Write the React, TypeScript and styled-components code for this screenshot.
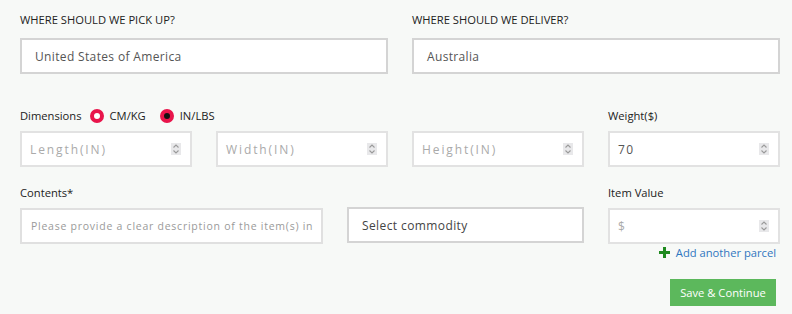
import { FC } from "react";
import styled, { createGlobalStyle } from "styled-components";

const GlobalStyle = createGlobalStyle`
  html, body {
    margin: 0;
    padding: 0;
    background: #f7f9f7;
  }
  body {
    font-family: "Open Sans", "Noto Sans", Arial, sans-serif;
    color: #333;
  }
`;

const Page = styled.div`
  width: 760px;
  padding: 11px 12px 6px 20px;
`;

const Grid = styled.div`
  display: grid;
  grid-template-columns: repeat(4, 172px);
  column-gap: 24px;
`;

const Field = styled.div<{ span?: number }>`
  grid-column: span ${(p) => p.span || 1};
  display: flex;
  flex-direction: column;
`;

const Label = styled.div<{ upper?: boolean }>`
  height: 18px;
  line-height: 18px;
  font-size: 11.2px;
  color: #222;
  margin-bottom: ${(p) => (p.upper ? "9px" : "6px")};
  display: flex;
  align-items: center;
  gap: 6px;
`;

const TextBox = styled.div`
  height: 36px;
  box-sizing: border-box;
  border: 2px solid #d4d4d4;
  background: #fff;
  padding: 0 13px;
  display: flex;
  align-items: center;
  font-size: 12px;
  letter-spacing: 0.35px;
  color: #555;
`;

const NumberBox = styled.div<{ placeholder?: boolean }>`
  height: 36px;
  box-sizing: border-box;
  border: 2px solid #e2e2e2;
  background: #fff;
  padding: 0 9px 0 8px;
  display: flex;
  align-items: center;
  justify-content: space-between;
  font-size: 12px;
  letter-spacing: ${(p) => (p.placeholder ? "1.9px" : "1.3px")};
  color: ${(p) => (p.placeholder ? "#aaa" : "#555")};
`;

const Spinner = styled.span`
  width: 10px;
  height: 12px;
  background: #e8e8ea;
  display: flex;
  align-items: center;
  justify-content: center;
`;

const Radio = styled.span<{ checked?: boolean }>`
  width: 14px;
  height: 14px;
  border-radius: 50%;
  box-sizing: border-box;
  border: 4px solid #e8154b;
  background: ${(p) => (p.checked ? "#111" : "#fff")};
  margin-left: 2px;
`;

const RadioLabel = styled.span`
  margin-right: 6px;
`;

const RowGap = styled.div<{ h: number }>`
  height: ${(p) => p.h}px;
`;

const ContentsRow = styled.div`
  grid-column: span 3;
  display: grid;
  grid-template-columns: 303px 237px;
  column-gap: 24px;
  align-items: end;
`;

const DescBox = styled(TextBox)`
  border-color: #e0e0e0;
  padding: 0 9px;
  font-size: 10.5px;
  letter-spacing: 0.75px;
  color: #9a9a9a;
  white-space: nowrap;
  overflow: hidden;
`;

const SelectBox = styled(TextBox)`
  height: 36px;
  margin-bottom: 1px;
  font-size: 12px;
  color: #444;
  letter-spacing: 0.4px;
`;

const Footer = styled.div`
  display: flex;
  flex-direction: column;
  align-items: flex-end;
`;

const AddLink = styled.a`
  display: flex;
  align-items: center;
  gap: 6px;
  margin-top: 1px;
  margin-right: 4px;
  font-size: 11.2px;
  color: #2f76c0;
  text-decoration: none;
`;

const SaveButton = styled.button`
  margin-top: 19px;
  margin-right: 4px;
  width: 106px;
  height: 27px;
  border: none;
  background: #5cb85c;
  color: #fff;
  font-family: "Open Sans", "Noto Sans", Arial, sans-serif;
  font-size: 11.2px;
  padding: 0;
`;

const SpinIcon: FC = () => (
  <Spinner>
    <svg width="8" height="10" viewBox="0 0 8 10" fill="none" stroke="#9a9a9a" strokeWidth="1.1">
      <path d="M1.5 3.5 L4 1 L6.5 3.5" />
      <path d="M1.5 6.5 L4 9 L6.5 6.5" />
    </svg>
  </Spinner>
);

const NumberField: FC<{ value?: string; placeholder?: string }> = ({ value, placeholder }) => (
  <NumberBox placeholder={!value}>
    <span>{value || placeholder}</span>
    <SpinIcon />
  </NumberBox>
);

const PlusIcon: FC = () => (
  <svg width="11" height="11" viewBox="0 0 11 11">
    <rect x="4" y="0" width="3" height="11" fill="#1f8a1f" />
    <rect x="0" y="4" width="11" height="3" fill="#1f8a1f" />
  </svg>
);

export default function App() {
  return (
    <Page>
      <GlobalStyle />
      <Grid>
        <Field span={2}>
          <Label upper>WHERE SHOULD WE PICK UP?</Label>
          <TextBox>United States of America</TextBox>
        </Field>
        <Field span={2}>
          <Label upper>WHERE SHOULD WE DELIVER?</Label>
          <TextBox>Australia</TextBox>
        </Field>
      </Grid>
      <RowGap h={33} />
      <Grid>
        <Field span={3}>
          <Label>
            <span>Dimensions</span>
            <Radio />
            <RadioLabel>CM/KG</RadioLabel>
            <Radio checked />
            <RadioLabel>IN/LBS</RadioLabel>
          </Label>
        </Field>
        <Field>
          <Label>Weight($)</Label>
        </Field>
        <NumberField placeholder="Length(IN)" />
        <NumberField placeholder="Width(IN)" />
        <NumberField placeholder="Height(IN)" />
        <NumberField value="70" />
      </Grid>
      <RowGap h={17} />
      <Grid>
        <ContentsRow>
          <Field>
            <Label>Contents*</Label>
            <DescBox>Please provide a clear description of the item(s) in</DescBox>
          </Field>
          <SelectBox>Select commodity</SelectBox>
        </ContentsRow>
        <Field>
          <Label>Item Value</Label>
          <NumberField placeholder="$" />
        </Field>
      </Grid>
      <Footer>
        <AddLink href="#">
          <PlusIcon />
          Add another parcel
        </AddLink>
        <SaveButton>Save &amp; Continue</SaveButton>
      </Footer>
    </Page>
  );
}
